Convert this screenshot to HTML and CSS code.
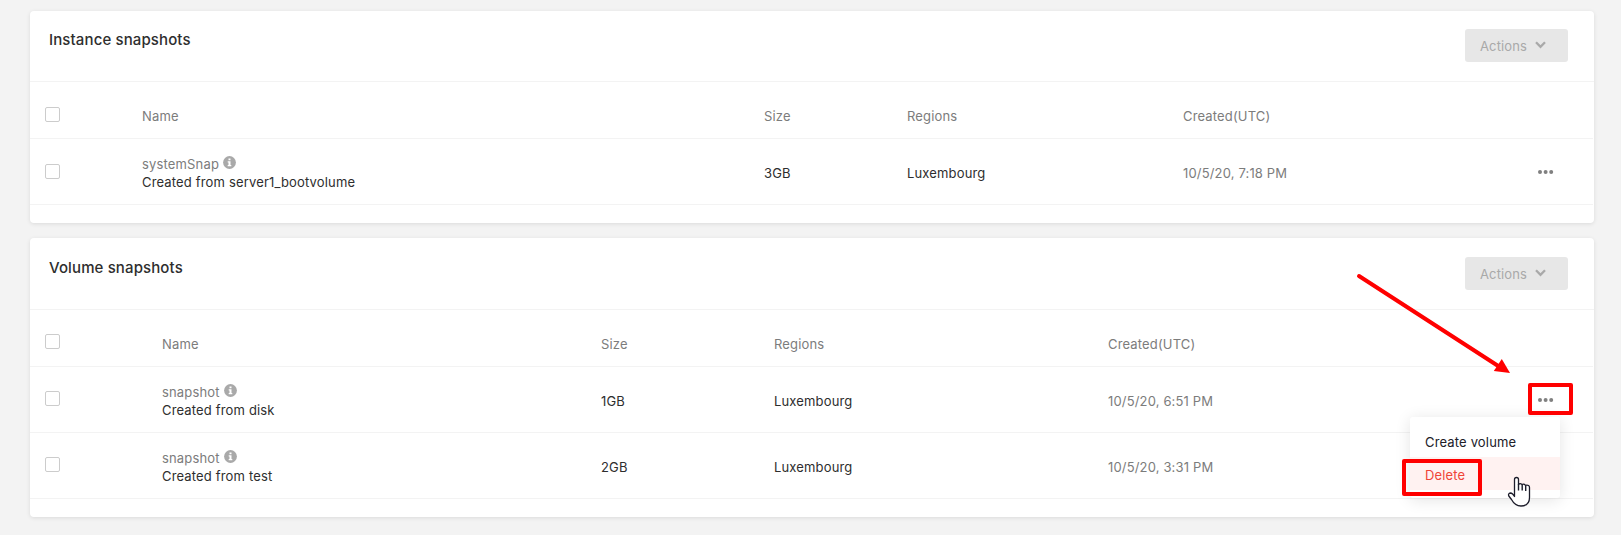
FILE: index.html
```html
<!DOCTYPE html>
<html lang="en">
<head>
<meta charset="utf-8">
<title>Snapshots</title>
<link rel="stylesheet" href="styles.css">
</head>
<body>
<svg width="0" height="0" class="defs">
  <symbol id="chevron" viewBox="0 0 11 8"><path d="M1 1.3 5.5 5.9 10 1.3" fill="none" stroke="#a9a9a9" stroke-width="2.3"/></symbol>
  <symbol id="info" viewBox="0 0 13 13"><circle cx="6.5" cy="6.5" r="6.4" fill="#a9a9a9"/><path d="M5.5 2.4h2v1.9h-2zM4.7 5.3h2.8v3.7h.8v1.3H4.7V9h.8V6.600h-.8z" fill="#fff"/></symbol>
  <symbol id="dots" viewBox="0 0 16 4"><g fill="#808080"><circle cx="2" cy="2" r="2"/><circle cx="7.600" cy="2" r="2"/><circle cx="13.200" cy="2" r="2"/></g></symbol>
</svg>
<main class="page">
  <section class="card instances">
    <header class="card-head">
      <h2>Instance snapshots</h2>
      <button class="actions"><span>Actions</span><svg class="chevron"><use href="#chevron"/></svg></button>
    </header>
    <div class="row head"><i class="check"></i><span>Name</span><span>Size</span><span>Regions</span><span>Created(UTC)</span></div>
    <div class="row"><i class="check"></i>
      <div class="name"><div class="label"><span>systemSnap</span><svg class="info"><use href="#info"/></svg></div><div class="from">Created from server1_bootvolume</div></div>
      <span class="dark">3GB</span><span class="dark">Luxembourg</span><span>10/5/20, 7:18 PM</span><svg class="dots"><use href="#dots"/></svg></div>
  </section>
  <section class="card volumes">
    <header class="card-head">
      <h2>Volume snapshots</h2>
      <button class="actions"><span>Actions</span><svg class="chevron"><use href="#chevron"/></svg></button>
    </header>
    <div class="row head"><i class="check"></i><span>Name</span><span>Size</span><span>Regions</span><span>Created(UTC)</span></div>
    <div class="row"><i class="check"></i>
      <div class="name"><div class="label"><span>snapshot</span><svg class="info"><use href="#info"/></svg></div><div class="from">Created from disk</div></div>
      <span class="dark">1GB</span><span class="dark">Luxembourg</span><span>10/5/20, 6:51 PM</span><svg class="dots"><use href="#dots"/></svg></div>
    <div class="row"><i class="check"></i>
      <div class="name"><div class="label"><span>snapshot</span><svg class="info"><use href="#info"/></svg></div><div class="from">Created from test</div></div>
      <span class="dark">2GB</span><span class="dark">Luxembourg</span><span>10/5/20, 3:31 PM</span></div>
  </section>
</main>
<div class="menu"><div class="item">Create volume</div><div class="item delete">Delete</div></div>
<svg class="overlay" viewBox="0 0 1621 535">
  <g fill="none" stroke="#f00" stroke-width="4" stroke-linejoin="round">
    <rect x="1530" y="385" width="41" height="28"/>
    <rect x="1404" y="461" width="76" height="33"/>
    <path d="M1359 276 1499 366.500" stroke-linecap="round"/>
  </g>
  <path d="M1510 373 1493.800 371 1501.800 359z" fill="#f00"/>
  <path d="M1514.500 492.500V479.500Q1514.500 477.500 1516.500 477.500 1518.500 477.500 1518.500 479.500V484.500Q1520 482.800 1522 484.500 1524 483.500 1525.500 485.300 1529.500 484.500 1529.500 487.500V497.500Q1529.500 506 1521 506 1515 506 1511.500 499.500L1508.800 496Q1507.800 493.500 1510.500 493 1512.500 493 1514.500 496.500Z" fill="#fff" stroke="#1d1d2b" stroke-width="1.300" stroke-linejoin="round"/>
  <path d="M1518.500 484V490.500M1522.200 485V490.500M1525.700 486V491" fill="none" stroke="#1d1d2b" stroke-width="1.400"/>
</svg>
</body>
</html>
```

FILE: styles.css
```css
* { box-sizing: border-box; }
body { margin: 0; height: 535px; overflow: hidden; background: #f3f3f3; color: #7c7c7c; font: 13px/18px Inter, sans-serif; letter-spacing: 0.16px; }
.defs { position: absolute; }
.page { display: flex; flex-direction: column; gap: 15px; padding: 11px 27px 0 30px; }
.card { background: #fff; border-radius: 4px; box-shadow: 0 1px 4px rgba(0, 0, 0, .1); }
.instances { height: 212px; --cols: 97px 622px 143px 276px 355px; --check: 25px; }
.volumes { height: 279px; --cols: 117px 439px 173px 334px 430px; --check: 24px; }
.card-head { display: flex; justify-content: space-between; align-items: flex-start; height: 71px; padding: 18px 26px 0 19px; border-bottom: 1px solid #f3f3f3; }
.volumes .card-head { height: 72px; padding-top: 19px; }
h2 { margin: 1px 0 0; color: #2e2e2e; font-size: 15px; line-height: 20px; font-weight: 500; letter-spacing: .12px; }
.actions { display: flex; align-items: center; width: 103px; height: 33px; padding: 1px 15px 0; border: 0; border-radius: 3px; background: #e7e7e7; color: #a9a9a9; font: inherit; letter-spacing: .12px; }
.chevron { width: 11px; height: 8px; margin: -3px 0 0 8px; }
.row { display: grid; grid-template-columns: var(--cols) 1fr; height: 66px; margin-right: 1px; padding-left: 15px; border-bottom: 1px solid #f3f3f3; }
.row.head { height: 57px; }
.row > span { padding-top: 25px; }
.check { width: 15px; height: 15px; margin-top: var(--check); border: 1px solid #ccc; border-radius: 2px; }
.name { padding-top: 16px; }
.label { display: flex; align-items: center; height: 18px; }
.info { width: 13px; height: 13px; margin: -3px 0 0 4px; }
.dark, .from { color: #2e2e2e; }
.dots { width: 16px; height: 4px; margin-top: 31px; }
.menu { position: absolute; left: 1410px; top: 417px; width: 150px; height: 81px; padding: 7px 0 8px; background: #fff; border-radius: 3px; box-shadow: 0 2px 16px rgba(0, 0, 0, .11); color: #202028; }
.item { height: 33px; padding: 9px 15px; }
.delete { background: #fff2f1; color: #f04438; }
.overlay { position: absolute; left: 0; top: 0; width: 1621px; height: 535px; }
```
